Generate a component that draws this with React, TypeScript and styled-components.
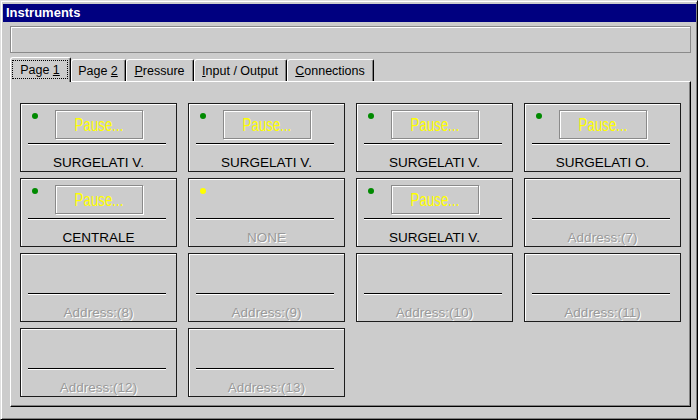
import React from 'react';
import styled, { createGlobalStyle } from 'styled-components';

const GlobalStyle = createGlobalStyle`
  html, body {
    margin: 0;
    padding: 0;
    background: #cccccc;
  }
  body {
    font-family: "Liberation Sans", Arial, sans-serif;
  }
`;

const Window = styled.div`
  box-sizing: border-box;
  width: 698px;
  height: 420px;
  background: #cccccc;
  border: 1px solid;
  border-color: #dfdfdf #000000 #000000 #dfdfdf;
  box-shadow: inset 1px 1px 0 #ffffff, inset -1px -1px 0 #808080;
  padding: 3px 1px 0 2px;
  display: flex;
  flex-direction: column;
`;

const TitleBar = styled.div`
  height: 18px;
  background: #000080;
  color: #ffffff;
  font-weight: bold;
  font-size: 13px;
  line-height: 18px;
  padding-left: 3px;
`;

const Body = styled.div`
  display: flex;
  flex-direction: column;
  padding: 4px 5px 0 7px;
`;

const StatusField = styled.div`
  box-sizing: border-box;
  height: 27px;
  border: 1px solid #8a8a8a;
  box-shadow: inset 1px 1px 0 #ffffff;
`;

const TabRow = styled.div`
  display: flex;
  align-items: flex-end;
  height: 24px;
  margin-top: 4px;
  position: relative;
  z-index: 1;
`;

const Tab = styled.div<{ $active?: boolean; $width: number }>`
  box-sizing: border-box;
  width: ${(p) => p.$width}px;
  height: ${(p) => (p.$active ? 25 : 22)}px;
  margin-bottom: ${(p) => (p.$active ? -1 : 0)}px;
  background: #cccccc;
  border-top: 1px solid #ffffff;
  border-left: 1px solid #ffffff;
  border-right: 1px solid #000000;
  border-radius: 3px 2px 0 0;
  box-shadow: inset -1px 0 0 #808080;
  padding: ${(p) => (p.$active ? '2px 2px 2px 1px' : '0 2px 0 1px')};
  display: flex;
  font-size: 12.5px;
  color: #000000;
`;

const TabLabel = styled.span<{ $focused?: boolean }>`
  flex: 1;
  display: block;
  height: ${(p) => (p.$focused ? 19 : 21)}px;
  line-height: ${(p) => (p.$focused ? 20 : 22)}px;
  text-align: center;
  outline: ${(p) => (p.$focused ? '1px dotted #000000' : 'none')};
  outline-offset: -1px;
  white-space: pre;
  u {
    text-decoration: underline;
    text-underline-offset: 1px;
  }
`;

const Panel = styled.div`
  box-sizing: border-box;
  height: 326px;
  border-top: 1px solid #ffffff;
  border-left: 1px solid #ffffff;
  border-right: 1px solid #000000;
  border-bottom: 1px solid #000000;
  box-shadow: inset -1px -1px 0 #808080;
  padding: 21px 0 0 9px;
`;

const Grid = styled.div`
  display: grid;
  grid-template-columns: repeat(4, 157px);
  column-gap: 11px;
  row-gap: 6px;
`;

const Card = styled.div`
  box-sizing: border-box;
  height: 69px;
  border: 1px solid #1c1c1c;
  box-shadow: inset 1px 1px 0 #ffffff;
  display: flex;
  flex-direction: column;
`;

const TopRow = styled.div`
  box-sizing: border-box;
  height: 36px;
  display: flex;
  align-items: flex-start;
  padding: 6px 0 0 11px;
`;

const Led = styled.span<{ $color: string }>`
  width: 6px;
  height: 6px;
  margin-top: 3px;
  border-radius: 50%;
  background: ${(p) => p.$color};
  flex: none;
`;

const Display = styled.div`
  box-sizing: border-box;
  width: 88px;
  height: 29px;
  margin-left: 17px;
  border: 1px solid #8a8a8a;
  box-shadow: 1px 1px 0 #ffffff, inset 1px 1px 0 #ffffff;
  display: flex;
  align-items: center;
  justify-content: center;
  overflow: hidden;
`;

const DisplayText = styled.span`
  display: inline-block;
  color: #ffff00;
  font-size: 18px;
  line-height: 18px;
  transform: scaleX(0.74);
  white-space: nowrap;
`;

const Separator = styled.div`
  width: 138px;
  height: 0;
  margin: 3px 0 0 7px;
  border-top: 1px solid #000000;
  border-bottom: 1px solid #ffffff;
`;

const Label = styled.div<{ $disabled?: boolean }>`
  height: 16px;
  line-height: 16px;
  margin-top: 10px;
  text-align: center;
  font-size: 13.5px;
  white-space: nowrap;
  color: ${(p) => (p.$disabled ? '#9a9a9a' : '#000000')};
  text-shadow: ${(p) => (p.$disabled ? '1px 1px 0 #ffffff' : 'none')};
`;

type Instrument = {
  led?: string;
  display?: string;
  label: string;
  disabled?: boolean;
};

const GREEN = '#008a00';
const YELLOW = '#ffff00';

const instruments: Instrument[] = [
  { led: GREEN, display: 'Pause...', label: 'SURGELATI V.' },
  { led: GREEN, display: 'Pause...', label: 'SURGELATI V.' },
  { led: GREEN, display: 'Pause...', label: 'SURGELATI V.' },
  { led: GREEN, display: 'Pause...', label: 'SURGELATI O.' },
  { led: GREEN, display: 'Pause...', label: 'CENTRALE' },
  { led: YELLOW, label: 'NONE', disabled: true },
  { led: GREEN, display: 'Pause...', label: 'SURGELATI V.' },
  ...[7, 8, 9, 10, 11, 12, 13].map((n) => ({ label: `Address:(${n})`, disabled: true })),
];

const tabs = [
  { text: 'Page ', key: '1', rest: '', width: 61, active: true },
  { text: 'Page ', key: '2', rest: '', width: 55 },
  { text: '', key: 'P', rest: 'ressure', width: 68 },
  { text: '', key: 'I', rest: 'nput / Output', width: 93 },
  { text: '', key: 'C', rest: 'onnections', width: 87 },
];

const App: React.FC = () => {
  return (
    <>
      <GlobalStyle />
      <Window>
        <TitleBar>Instruments</TitleBar>
        <Body>
          <StatusField />
          <TabRow>
            {tabs.map((t, i) => (
              <Tab key={i} $active={t.active} $width={t.width}>
                <TabLabel $focused={t.active}>
                  {t.text}
                  <u>{t.key}</u>
                  {t.rest}
                </TabLabel>
              </Tab>
            ))}
          </TabRow>
          <Panel>
            <Grid>
              {instruments.map((inst, i) => (
                <Card key={i}>
                  <TopRow>
                    {inst.led ? <Led $color={inst.led} /> : null}
                    {inst.display ? (
                      <Display>
                        <DisplayText>{inst.display}</DisplayText>
                      </Display>
                    ) : null}
                  </TopRow>
                  <Separator />
                  <Label $disabled={inst.disabled}>{inst.label}</Label>
                </Card>
              ))}
            </Grid>
          </Panel>
        </Body>
      </Window>
    </>
  );
};

export default App;
